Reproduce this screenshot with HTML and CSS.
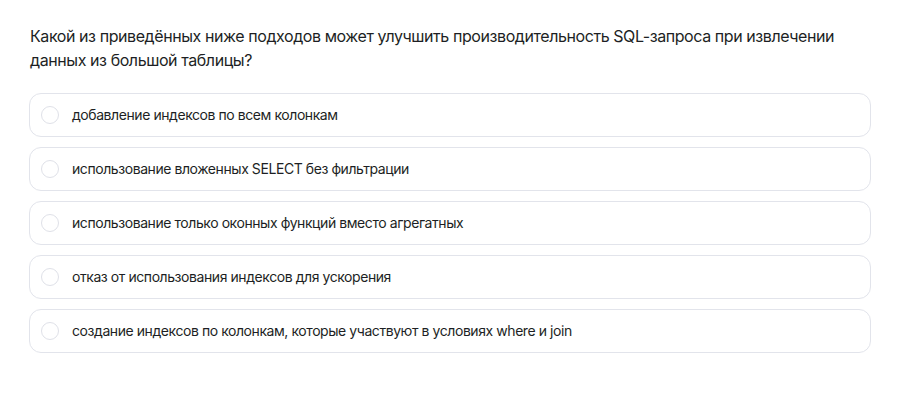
FILE: index.html
```html
<!DOCTYPE html>
<html lang="ru">
<head>
<meta charset="utf-8">
<link rel="stylesheet" href="styles.css">
</head>
<body>
<div class="quiz">
  <p class="question">Какой из приведённых ниже подходов может улучшить производительность SQL-запроса при извлечении данных из большой таблицы?</p>
  <div class="options">
    <label class="option"><span class="radio"></span><span class="text">добавление индексов по всем колонкам</span></label>
    <label class="option"><span class="radio"></span><span class="text">использование вложенных SELECT без фильтрации</span></label>
    <label class="option"><span class="radio"></span><span class="text">использование только оконных функций вместо агрегатных</span></label>
    <label class="option"><span class="radio"></span><span class="text">отказ от использования индексов для ускорения</span></label>
    <label class="option"><span class="radio"></span><span class="text">создание индексов по колонкам, которые участвуют в условиях where и join</span></label>
  </div>
</div>
</body>
</html>
```

FILE: styles.css
```css
html, body {
  margin: 0;
  padding: 0;
  background: #ffffff;
}
body {
  font-family: Inter, "Noto Sans", sans-serif;
  color: #1d1f24;
}
.quiz {
  width: 842px;
  padding: 24px 0 0 29px;
}
.question {
  margin: 0 0 21px 1px;
  font-size: 16px;
  line-height: 24px;
  font-weight: 400;
  letter-spacing: -0.42px;
}
.options {
  display: flex;
  flex-direction: column;
  gap: 10px;
}
.option {
  display: flex;
  align-items: center;
  height: 44px;
  box-sizing: border-box;
  border: 1px solid #e2e4eb;
  border-radius: 12px;
  padding-left: 11px;
  gap: 13px;
}
.radio {
  width: 18px;
  height: 18px;
  box-sizing: border-box;
  border: 1px solid #dfe1e8;
  border-radius: 50%;
  flex: none;
}
.text {
  font-size: 14px;
  line-height: 20px;
  letter-spacing: -0.43px;
}
```
